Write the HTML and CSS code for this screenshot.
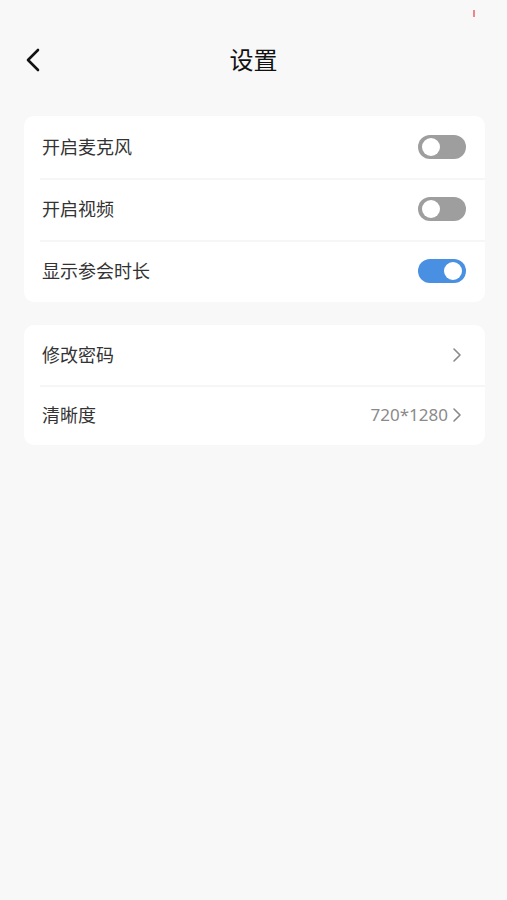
FILE: index.html
```html
<!DOCTYPE html>
<html lang="zh-CN">
  <head>
    <meta charset="UTF-8" />
    <meta name="viewport" content="width=device-width, initial-scale=1.0" />
    <title>设置</title>
    <link rel="stylesheet" href="styles.css">
  </head>
  <body>
    <div class="status-bar"><span class="status-dot"></span></div>
    <header class="nav">
      <a class="back" href="#">
        <svg width="18" height="26" viewBox="0 0 18 26">
          <path d="M14 3 L4 13 L14 23" fill="none" stroke="#111" stroke-width="2.6" stroke-linecap="round" stroke-linejoin="round" />
        </svg>
      </a>
      <h1 class="title">设置</h1>
    </header>

    <div class="card">
      <div class="row">
        <span class="label">开启麦克风</span>
        <span class="switch"></span>
      </div>
      <div class="row">
        <span class="label">开启视频</span>
        <span class="switch"></span>
      </div>
      <div class="row">
        <span class="label">显示参会时长</span>
        <span class="switch on"></span>
      </div>
    </div>

    <div class="card">
      <div class="row short">
        <span class="label">修改密码</span>
        <span class="more">
          <svg class="chevron" width="10" height="16" viewBox="0 0 10 16">
            <path d="M2 2 L8 8 L2 14" fill="none" stroke="#888" stroke-width="1.6" stroke-linecap="round" stroke-linejoin="round" />
          </svg>
        </span>
      </div>
      <div class="row short">
        <span class="label">清晰度</span>
        <span class="more">
          <span class="value">720*1280</span>
          <svg class="chevron" width="10" height="16" viewBox="0 0 10 16">
            <path d="M2 2 L8 8 L2 14" fill="none" stroke="#888" stroke-width="1.6" stroke-linecap="round" stroke-linejoin="round" />
          </svg>
        </span>
      </div>
    </div>
  </body>
</html>
```

FILE: styles.css
```css
body {
  margin: 0;
  min-height: 100vh;
  background-color: #f8f8f8;
  font-family: "Noto Sans CJK SC", "Noto Sans", sans-serif;
  color: #333;
}
.status-bar {
  height: 24px;
  display: flex;
  justify-content: flex-end;
  align-items: center;
  padding-right: 32px;
}
.status-dot {
  width: 2px;
  height: 7px;
  background-color: #e88;
  margin-top: 2px;
}
.nav {
  height: 72px;
  display: flex;
  align-items: center;
  justify-content: center;
  position: relative;
}
.back {
  position: absolute;
  left: 24px;
  top: 23px;
  display: flex;
}
.title {
  margin: -4px 0 0 0;
  font-size: 24px;
  font-weight: 400;
  color: #111;
}
.card {
  background-color: #fff;
  border-radius: 10px;
  margin: 20px 22px 0 24px;
  overflow: hidden;
}
.card + .card {
  margin-top: 23px;
}
.row {
  height: 62px;
  display: flex;
  align-items: center;
  justify-content: space-between;
  padding: 0 19px 0 18px;
  position: relative;
}
.row.short {
  height: 60px;
  padding-right: 23px;
}
.row + .row::before {
  content: "";
  position: absolute;
  left: 16px;
  right: 0;
  top: 0;
  height: 2px;
  background-color: #f6f6f6;
}
.label {
  font-size: 18px;
  color: #333;
  margin-top: -3px;
}
.switch {
  width: 48px;
  height: 24px;
  border-radius: 12px;
  background-color: #9e9e9e;
  position: relative;
}
.switch::after {
  content: "";
  position: absolute;
  left: 4px;
  top: 3px;
  width: 18px;
  height: 18px;
  border-radius: 50%;
  background-color: #fff;
}
.switch.on {
  background-color: #4a90e2;
}
.switch.on::after {
  left: auto;
  right: 4px;
}
.more {
  display: flex;
  align-items: center;
  gap: 4px;
}
.value {
  font-family: "Noto Sans", "Liberation Sans", sans-serif;
  font-size: 17px;
  color: #8a8a8a;
  margin-top: -2px;
}
.chevron {
  display: block;
}
```
